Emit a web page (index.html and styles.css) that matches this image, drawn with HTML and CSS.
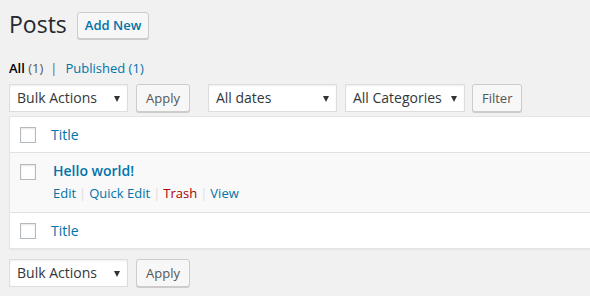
FILE: index.html
```html
<!DOCTYPE html>
<html>
<head>
<meta charset="utf-8">
<link rel="stylesheet" href="styles.css">
</head>
<body>
<div class="wrap">
  <div class="heading">
    <h1 class="title">Posts</h1>
    <a class="btn add-new">Add New</a>
  </div>
  <ul class="subsub">
    <li class="current">All <span class="count">(1)</span></li>
    <li class="sep">|</li>
    <li><a>Published <span class="count">(1)</span></a></li>
  </ul>
  <div class="tablenav">
    <div class="select w-bulk"><span>Bulk Actions</span><i class="arrow"></i></div>
    <a class="btn">Apply</a>
    <div class="select w-dates gap-left"><span>All dates</span><i class="arrow"></i></div>
    <div class="select w-cats"><span>All Categories</span><i class="arrow"></i></div>
    <a class="btn filter">Filter</a>
  </div>
  <div class="table">
    <div class="row head">
      <span class="cb"></span>
      <a class="col-title">Title</a>
    </div>
    <div class="row post">
      <span class="cb"></span>
      <div class="post-main">
        <a class="post-title">Hello world!</a>
        <div class="actions">
          <a>Edit</a><span class="bar">|</span><a>Quick Edit</a><span class="bar">|</span><a class="trash">Trash</a><span class="bar">|</span><a>View</a>
        </div>
      </div>
    </div>
    <div class="row head foot">
      <span class="cb"></span>
      <a class="col-title">Title</a>
    </div>
  </div>
  <div class="tablenav bottom">
    <div class="select w-bulk"><span>Bulk Actions</span><i class="arrow"></i></div>
    <a class="btn">Apply</a>
  </div>
</div>
</body>
</html>
```

FILE: styles.css
```css
* { box-sizing: border-box; }
html, body { margin: 0; padding: 0; }
body {
  background: #f1f1f1;
  font-family: "Open Sans", sans-serif;
  font-size: 13px;
  color: #444;
  width: 590px;
  height: 296px;
  overflow: hidden;
}
a { color: #0073aa; text-decoration: none; }
.wrap { padding: 9px 0 0 9px; width: 640px; }
.heading { display: flex; align-items: center; gap: 10px; height: 31px; }
.title {
  margin: 0;
  font-size: 23px;
  font-weight: 400;
  color: #23282d;
  line-height: 29px;
}
.btn {
  display: inline-flex;
  align-items: center;
  justify-content: center;
  height: 28px;
  padding: 0 9px 1px;
  background: #f7f7f7;
  border: 1px solid #ccc;
  border-radius: 3px;
  box-shadow: 0 1px 0 #ccc;
  color: #555;
  font-size: 13px;
}
.add-new {
  height: 27px;
  padding: 0 7px 1px;
  color: #0073aa;
  font-weight: 600;
  margin-top: 2px;
}
.subsub {
  list-style: none;
  margin: 0;
  padding: 0;
  display: flex;
  gap: 6px;
  margin-top: 19px;
  line-height: 18px;
  height: 18px;
}
.subsub .current { color: #000; font-weight: 600; }
.subsub .count { color: #555; font-weight: 400; }
.subsub a .count { color: #0073aa; }
.subsub .sep { color: #666; margin: 0 2px 0 1px; }
.tablenav {
  display: flex;
  align-items: center;
  gap: 8px;
  margin-top: 7px;
  height: 28px;
}
.tablenav.bottom { margin-top: 10px; }
.select {
  position: relative;
  display: flex;
  align-items: center;
  height: 28px;
  padding: 0 0 1px 7px;
  background: #fff;
  border: 1px solid #ddd;
  box-shadow: inset 0 1px 2px rgba(0,0,0,.07);
  color: #32373c;
  font-size: 14px;
}
.select .arrow {
  position: absolute;
  right: 7px;
  top: 11px;
  width: 0;
  height: 0;
  border-left: 3px solid transparent;
  border-right: 3px solid transparent;
  border-top: 6px solid #333;
}
.w-bulk { width: 119px; }
.w-dates { width: 129px; }
.w-cats { width: 120px; }
.gap-left { margin-left: 10px; }
.filter { margin-left: -1px; }
.table {
  margin-top: 4px;
  background: #fff;
  border: 1px solid #e5e5e5;
  box-shadow: 0 1px 1px rgba(0,0,0,.04);
  width: 640px;
}
.row { display: flex; align-items: center; }
.row.head { height: 35px; }
.row.post {
  height: 61px;
  background: #f9f9f9;
  border-top: 1px solid #e1e1e1;
  border-bottom: 1px solid #e1e1e1;
  align-items: flex-start;
}
.cb {
  width: 16px;
  height: 16px;
  border: 1px solid #b4b9be;
  background: #fff;
  box-shadow: inset 0 1px 2px rgba(0,0,0,.1);
  margin-left: 10px;
  flex: none;
}
.row.head .cb { margin-top: 1px; }
.foot .col-title { margin-top: -1px; }
.col-title { margin-left: 15px; font-size: 14px; }
.row.post .cb { margin-top: 11px; }
.post-main { margin-left: 17px; padding-top: 8px; }
.post-title { font-weight: 600; font-size: 14px; display: block; line-height: 20px; }
.actions { margin-top: 2px; line-height: 20px; display: flex; }
.actions .bar { color: #ddd; margin: 0 3px; }
.actions .trash { color: #a00; }
```
